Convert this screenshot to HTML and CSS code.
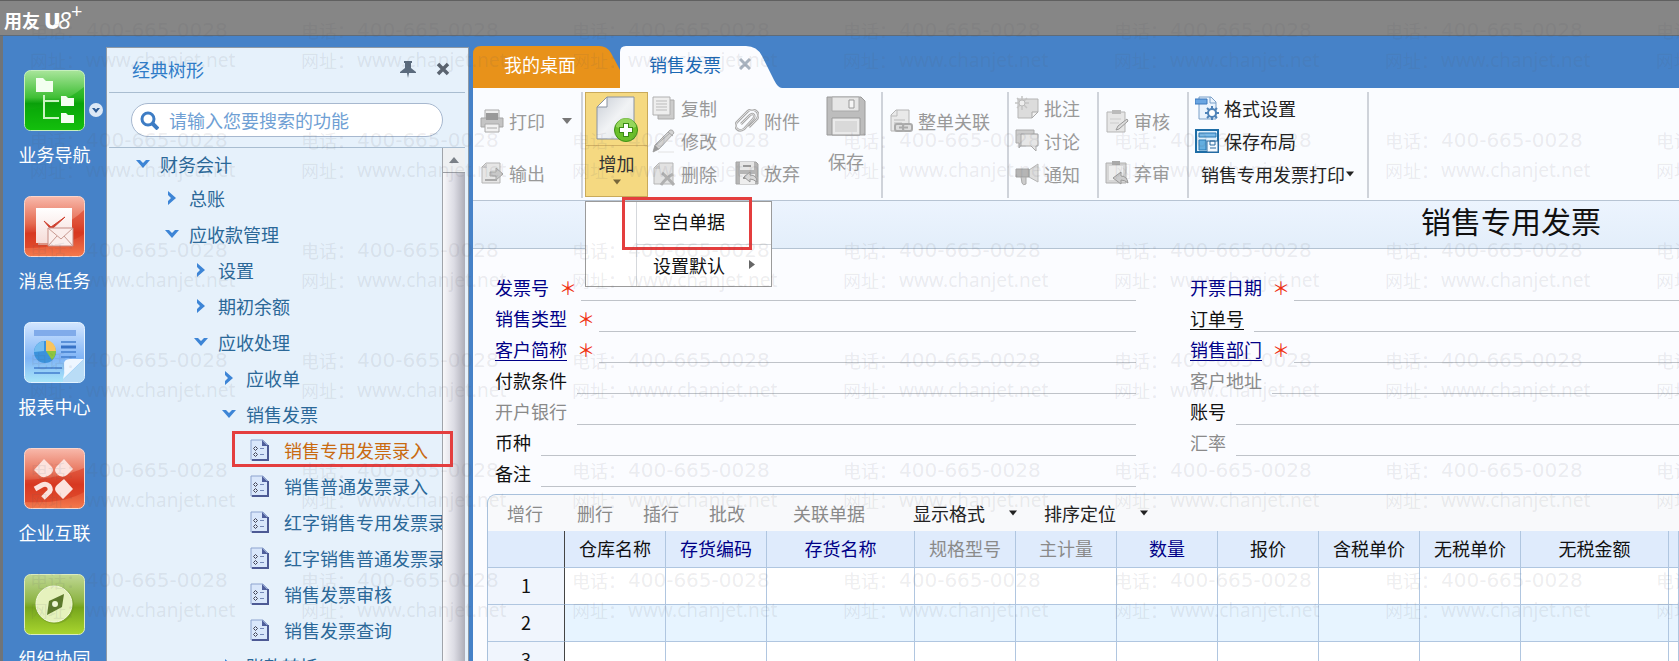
FILE: index.html
```html
<!DOCTYPE html>
<html lang="zh-CN">
<head>
<meta charset="utf-8">
<title>用友U8+ 销售发票</title>
<link rel="stylesheet" href="styles.css">
</head>
<body>
<svg class="defs" aria-hidden="true">
  <defs>
    <linearGradient id="g-green" x1="0" y1="0" x2="0" y2="1"><stop offset="0" stop-color="#a9e59b"/><stop offset=".45" stop-color="#3fbf35"/><stop offset=".55" stop-color="#0aa00a"/><stop offset="1" stop-color="#1fd312"/></linearGradient>
    <linearGradient id="g-red" x1="0" y1="0" x2="0" y2="1"><stop offset="0" stop-color="#f8b9ab"/><stop offset=".45" stop-color="#e56a50"/><stop offset=".6" stop-color="#d9402a"/><stop offset="1" stop-color="#f4794c"/></linearGradient>
    <linearGradient id="g-blue" x1="0" y1="0" x2="0" y2="1"><stop offset="0" stop-color="#d3e6ff"/><stop offset=".6" stop-color="#7fb4f6"/><stop offset="1" stop-color="#a9e6f8"/></linearGradient>
    <linearGradient id="g-lime" x1="0" y1="0" x2="0" y2="1"><stop offset="0" stop-color="#c0d894"/><stop offset=".45" stop-color="#8db444"/><stop offset=".55" stop-color="#76a51c"/><stop offset="1" stop-color="#a9d62f"/></linearGradient>
    <linearGradient id="g-white" x1="0" y1="0" x2="0" y2="1"><stop offset="0" stop-color="#ffffff"/><stop offset="1" stop-color="#f6dcd8"/></linearGradient>
    <linearGradient id="g-page" x1="0" y1="0" x2="1" y2="1"><stop offset="0" stop-color="#c9ced6"/><stop offset=".5" stop-color="#f1f3f5"/><stop offset="1" stop-color="#dfe3e6"/></linearGradient>
    <symbol id="down" viewBox="0 0 14 10"><path d="M0 1h4l3 3 3-3h4L7 9z" fill="#3d85d6"/></symbol>
    <symbol id="right" viewBox="0 0 10 14"><path d="M1 0v4l3 3-3 3v4l8-7z" fill="#3d85d6"/></symbol>
    <symbol id="doc" viewBox="0 0 19 22"><path d="M1 1h12l5 5v15H1z" fill="#d9e7fb" stroke="#8da3cf"/><path d="M18 6v15H2" fill="none" stroke="#4d5a94" stroke-width="2"/><path d="M12 1v6h6z" fill="#4f5f9c"/><g fill="none" stroke="#445"><path d="M5.500 7.500l2 2-2 2-2-2zM5.500 13.500l2 2-2 2-2-2z"/><path d="M10 9.500h4M10 15.500h4" stroke="#7488b8"/></g></symbol>
    <symbol id="caret" viewBox="0 0 10 6"><path d="M0 0h10L5 6z" fill="currentColor"/></symbol>
  </defs>
</svg>

<header class="titlebar">
  <span class="brand">用友</span><span class="brand-u">U</span><span class="brand-8">8</span><sup class="brand-plus">+</sup>
</header>

<div class="shell">
  <nav class="rail">
    <button class="rail-item">
      <svg class="rail-icon" viewBox="0 0 61 61"><rect x=".5" y=".5" width="60" height="60" rx="6" fill="url(#g-green)" stroke="#c6f0bd"/><path d="M1 40Q34 38 60 17v38q0 5-5 5H6q-5 0-5-5z" fill="#07a807" opacity=".45"/><path d="M20 25v23h15M20 31h15" fill="none" stroke="#c9f5c2" stroke-width="2"/><path d="M12 8h7l3 3h7v11H12zM37 26h5l2 2h6v8H37zM37 43h5l2 2h6v8H37z" fill="#f3fff0"/></svg>
      <span>业务导航</span>
      <svg class="rail-more" viewBox="0 0 14 14"><circle cx="7" cy="7" r="7" fill="#dce8f6"/><path d="M3 5h2.500L7 6.500 8.500 5H11L7 10z" fill="#2c5a94"/></svg>
    </button>
    <button class="rail-item">
      <svg class="rail-icon" viewBox="0 0 61 61"><rect x=".5" y=".5" width="60" height="60" rx="6" fill="url(#g-red)" stroke="#fbd5cb"/><path d="M1 37Q38 36 60 14v24q-20 14-59 14z" fill="#d52f18" opacity=".5"/><rect x="14" y="14" width="34" height="35" fill="#dc9485"/><rect x="12" y="12" width="36" height="35" fill="url(#g-white)"/><path d="M20 25l7 6 14-10-12 11q-2 1-4-1z" fill="#cf4130" stroke="#cf4130"/><path d="M24 32h25v18H24z" fill="#fbeeec" stroke="#c58b83"/><path d="M24 32l13 11 12-11M24 50l9-10M49 50l-9-10" fill="none" stroke="#c99a92"/></svg>
      <span>消息任务</span>
    </button>
    <button class="rail-item">
      <svg class="rail-icon" viewBox="0 0 61 61"><rect x=".5" y=".5" width="60" height="60" rx="6" fill="url(#g-blue)" stroke="#e4f3ff"/><path d="M10 8h42v6H10z" fill="#80abea"/><path d="M37 20h15M37 30h15M37 35h15M10 46h28M10 51h26" stroke="#437fce" stroke-width="1.500"/><path d="M37 25h15" stroke="#3672c6" stroke-width="3"/><circle cx="21" cy="30" r="11" fill="#3b92dc"/><path d="M22 29V18a11 11 0 0 1 10 11z" fill="#f9c45c"/><path d="M22 29h10q0 5-4 9z" fill="#8dc63f"/><path d="M10 30a11 11 0 0 1 10-11v10z" fill="#75bdf0"/><path d="M39 57q2-6 1-13-1-7 6-7h14z" fill="#eef6ff"/><path d="M39 58L60 37v17q0 6-6 6H39z" fill="#b9dcf6"/></svg>
      <span>报表中心</span>
    </button>
    <button class="rail-item">
      <svg class="rail-icon" viewBox="0 0 61 61"><rect x=".5" y=".5" width="60" height="60" rx="6" fill="url(#g-red)" stroke="#fbd5cb"/><path d="M1 32Q38 30 60 20v24q-20 12-59 10z" fill="#d52f18" opacity=".5"/><g fill="#fce3de"><path d="M20 11l7 7q4 4 0 8-7 6-12 1l-5-5zM40 11l9 10-6 6q-5 4-10-1-4-4 0-8zM40 31l9 10-10 10-6-6q-4-4 0-8z"/></g><path d="M11 41l7-4q4-2 7 1 3 4-1 7l-5 5" fill="none" stroke="#fce3de" stroke-width="5"/></svg>
      <span>企业互联</span>
    </button>
    <button class="rail-item">
      <svg class="rail-icon" viewBox="0 0 61 61"><rect x=".5" y=".5" width="60" height="60" rx="6" fill="url(#g-lime)" stroke="#dcebbd"/><circle cx="31" cy="31" r="19" fill="#6e9422" opacity=".5"/><circle cx="30" cy="30" r="18" fill="#e6f2bd" stroke="#f6fbe0"/><path d="M40 20l-2 13-15 8 2-14z" fill="#5d7a2b"/><circle cx="31" cy="30" r="3" fill="#eff6d4"/></svg>
      <span>组织协同</span>
    </button>
  </nav>

  <aside class="panel">
    <div class="panel-head">
      <h2>经典树形</h2>
      <button class="icon-button" aria-label="固定"><svg width="16" height="17" viewBox="0 0 16 17"><path d="M4 0h8v2h-1v5l5 4v1H9l-1 5-1-5H0v-1l5-4V2H4z" fill="#5b6b7d"/></svg></button>
      <button class="icon-button" aria-label="关闭"><svg width="14" height="14" viewBox="0 0 14 14"><path d="M2 2l10 10M12 2L2 12" stroke="#5b6470" stroke-width="3.500"/></svg></button>
    </div>
    <div class="search-area">
      <label class="search">
        <svg width="19" height="19" viewBox="0 0 19 19"><circle cx="8" cy="8" r="6" fill="none" stroke="#3d7cc4" stroke-width="3"/><path d="M12 12l6 6" stroke="#3d7cc4" stroke-width="4"/></svg>
        <input type="text" placeholder="请输入您要搜索的功能" aria-label="搜索功能">
      </label>
    </div>
    <div class="tree-area">
      <ul class="tree">
        <li class="node level-0"><svg class="arrow"><use href="#down"/></svg>财务会计</li>
        <li class="node level-1"><svg class="arrow"><use href="#right"/></svg>总账</li>
        <li class="node level-1"><svg class="arrow"><use href="#down"/></svg>应收款管理</li>
        <li class="node level-2"><svg class="arrow"><use href="#right"/></svg>设置</li>
        <li class="node level-2"><svg class="arrow"><use href="#right"/></svg>期初余额</li>
        <li class="node level-2"><svg class="arrow"><use href="#down"/></svg>应收处理</li>
        <li class="node level-3"><svg class="arrow"><use href="#right"/></svg>应收单</li>
        <li class="node level-3"><svg class="arrow"><use href="#down"/></svg>销售发票</li>
        <li class="node leaf current"><svg class="doc"><use href="#doc"/></svg>销售专用发票录入</li>
        <li class="node leaf"><svg class="doc"><use href="#doc"/></svg>销售普通发票录入</li>
        <li class="node leaf"><svg class="doc"><use href="#doc"/></svg>红字销售专用发票录入</li>
        <li class="node leaf"><svg class="doc"><use href="#doc"/></svg>红字销售普通发票录入</li>
        <li class="node leaf"><svg class="doc"><use href="#doc"/></svg>销售发票审核</li>
        <li class="node leaf"><svg class="doc"><use href="#doc"/></svg>销售发票查询</li>
        <li class="node level-3"><svg class="arrow"><use href="#right"/></svg>账款转抵</li>
      </ul>
      <div class="scrollbar"><button class="scroll-up" aria-label="向上滚动"><svg width="10" height="6" viewBox="0 0 10 6"><path d="M0 6h10L5 0z" fill="#7b8087"/></svg></button><div class="thumb"></div></div>
      <div class="mark mark-node"></div>
    </div>
  </aside>

  <main class="work">
    <div class="tabs">
      <button class="tab home">我的桌面</button>
      <button class="tab active">销售发票<svg width="12" height="12" viewBox="0 0 12 12"><path d="M1 1l10 10M11 1L1 11" stroke="#a9b3bf" stroke-width="3"/></svg></button>
    </div>

    <div class="ribbon">
      <div class="group print">
        <div class="column two">
          <button class="cmd"><svg class="ico" viewBox="0 0 24 24"><path d="M5 1h14v9H5z" fill="#eee" stroke="#aaa"/><path d="M1 9h22v9H1z" fill="#c4c4c4" stroke="#a5a5a5"/><path d="M6 4h12v7H6z" fill="#999"/><path d="M5 15h14v8H5z" fill="#f1f1f1" stroke="#aaa"/><path d="M7 19h10" stroke="#aaa"/></svg>打印<svg class="caret wide"><use href="#caret"/></svg></button>
          <button class="cmd"><svg class="ico" viewBox="0 0 24 24"><path d="M6 2h14v20H2V6z" fill="#e6e6e6" stroke="#b5b5b5"/><path d="M2 7l5-5v5z" fill="#ccc"/><path d="M10 11h6V7l7 6-7 6v-4h-6z" fill="#c8c8c8" stroke="#a8a8a8"/><path d="M5 19h12" stroke="#aaa" stroke-width="2"/></svg>输出</button>
        </div>
      </div>
      <div class="group edit">
        <div class="add-wrap">
          <button class="add">
            <span class="add-top"><svg width="42" height="47" viewBox="0 0 42 47"><path d="M11 1h27v42H1V11z" fill="url(#g-page)" stroke="#8a93a0"/><path d="M1 11h10V1z" fill="#fff" stroke="#8a93a0"/><circle cx="30" cy="34" r="11.500" fill="#6abf2a" stroke="#3f8f16"/><path d="M20 31a10 9 0 0 1 20 0q-10 4-20 0z" fill="#a6e070" opacity=".7"/><path d="M30 27v14M23 34h14" stroke="#3b8a15" stroke-width="6"/><path d="M30 28v12M24 34h12" stroke="#fff" stroke-width="4"/></svg></span>
            <span class="add-label">增加<svg class="caret small"><use href="#caret"/></svg></span>
          </button>
          <div class="menu">
            <button class="menu-item">空白单据</button>
            <button class="menu-item">设置默认<svg width="6" height="9" viewBox="0 0 6 9"><path d="M0 0l6 4.500L0 9z" fill="#666"/></svg></button>
          </div>
          <div class="mark mark-menu"></div>
        </div>
        <div class="column">
          <button class="cmd"><svg class="ico" viewBox="0 0 24 24"><path d="M6 4h16v19H6z" fill="#ccc" stroke="#aaa"/><path d="M1 1h17v18H1z" fill="#eee" stroke="#b0b0b0"/><path d="M4 5h11M4 8h11M4 11h11M4 14h11" stroke="#bbb"/></svg>复制</button>
          <button class="cmd"><svg class="ico" viewBox="0 0 24 24"><path d="M1 23l2-7L18 1q3-1 4 3L7 20z" fill="#d3d3d3" stroke="#aaa"/><path d="M1 23l2-7 4 4z" fill="#999"/><path d="M16 3l5 4M4 16L18 4" stroke="#aaa"/><path d="M6 23h16" stroke="#e2e2e2"/></svg>修改</button>
          <button class="cmd"><svg class="ico" viewBox="0 0 24 24"><path d="M7 1h14v21H2V6z" fill="#e2e2e2" stroke="#b5b5b5"/><path d="M2 7h6V1z" fill="#ccc"/><path d="M10 11q4 3 12 12M21 12Q14 16 9 23" stroke="#b0b0b0" stroke-width="3" fill="none"/></svg>删除</button>
        </div>
        <div class="column two attach">
          <button class="cmd"><svg class="ico" viewBox="0 0 24 24"><path d="M6 15L15 6q3-2 4 0t-1 4L9 20q-4 3-7 0t0-7L13 2q4-3 8 0t1 8l-8 8" fill="none" stroke="#aaa" stroke-width="2.500"/><path d="M6 15L15 6q3-2 4 0t-1 4L9 20q-4 3-7 0t0-7L13 2q4-3 8 0t1 8l-8 8" fill="none" stroke="#ddd"/></svg>附件</button>
          <button class="cmd"><svg class="ico" viewBox="0 0 24 24"><path d="M1 1h20l2 2v20H1z" fill="#b5b5b5" stroke="#a3a3a3"/><path d="M5 1h14v8H5z" fill="#e6e6e6"/><path d="M5 13h15v10H5z" fill="#eee"/><path d="M8 5h8M8 17h6" stroke="#999" stroke-width="2"/><path d="M22 21q0-7-7-7v-3l-6 5 6 5v-3q3 0 7 3z" fill="#d8d8d8" stroke="#999"/></svg>放弃</button>
        </div>
        <button class="save"><svg width="40" height="40" viewBox="0 0 40 40"><path d="M1 1h34l4 4v34H1z" fill="#bdbdbd" stroke="#9a9a9a"/><path d="M6 1h27v14H6z" fill="#e6e6e6" stroke="#aaa"/><path d="M23 4h5v8h-5z" fill="#f5f5f5" stroke="#999"/><path d="M6 22h28v17H6z" fill="#eaeaea" stroke="#999"/><path d="M9 25h22v11H9z" fill="#d9d9d9"/></svg>保存</button>
      </div>
      <div class="group relate">
        <div class="column two">
          <button class="cmd"><svg class="ico" viewBox="0 0 24 24"><path d="M7 1h13v21H2V6z" fill="#e9e9e9" stroke="#b5b5b5"/><path d="M2 7h6V1M5 11h11M5 14h8" fill="none" stroke="#bbb"/><rect x="6" y="15" width="9" height="7" rx="2" fill="#ddd" stroke="#aaa" stroke-width="2"/><rect x="14" y="15" width="9" height="7" rx="2" fill="#ddd" stroke="#aaa" stroke-width="2"/><path d="M10 18.500h9" stroke="#aaa" stroke-width="2"/></svg>整单关联</button>
        </div>
      </div>
      <div class="group notes">
        <div class="column">
          <button class="cmd"><svg class="ico" viewBox="0 0 24 24"><path d="M3 3h20v13l-6 6H3z" fill="#dcdcdc" stroke="#b5b5b5"/><path d="M23 16h-6v6z" fill="#f2f2f2" stroke="#aaa"/><path d="M7 0v14M0 7h14M2 2l10 10M12 2L2 12" stroke="#c4c4c4" stroke-width="1.500"/><circle cx="7" cy="7" r="3" fill="#eee" stroke="#bbb"/></svg>批注</button>
          <button class="cmd"><svg class="ico" viewBox="0 0 24 24"><path d="M1 1h18v13H8l-4 5v-5H1z" fill="#ccc" stroke="#aaa"/><path d="M6 5h17v12h-2v5l-5-5H6z" fill="#e6e6e6" stroke="#aaa"/></svg>讨论</button>
          <button class="cmd"><svg class="ico" viewBox="0 0 24 24"><path d="M14 8L23 2v18l-9-5z" fill="#ddd" stroke="#b5b5b5"/><path d="M1 7h13v8H1z" fill="#b5b5b5" stroke="#a3a3a3"/><path d="M6 15h5v7q-3 2-4-1z" fill="#ccc" stroke="#aaa"/></svg>通知</button>
        </div>
      </div>
      <div class="group audit">
        <div class="column two">
          <button class="cmd"><svg class="ico" viewBox="0 0 24 24"><path d="M2 3h18v20H2z" fill="#e6e6e6" stroke="#b5b5b5"/><path d="M7 1h9v4H7z" fill="#bbb"/><path d="M5 10h11M5 14h9" stroke="#ccc"/><path d="M11 21l2-4 9-7 1 2-9 8z" fill="#ddd" stroke="#999"/></svg>审核</button>
          <button class="cmd"><svg class="ico" viewBox="0 0 24 24"><path d="M1 2h20v20H1z" fill="#d6d6d6" stroke="#b0b0b0"/><path d="M4 5h14v14H4z" fill="#eee"/><path d="M7 0h8v4H7z" fill="#aaa"/><path d="M23 22q-1-7-7-7v-4l-8 6 8 6v-4q4 0 7 3z" fill="#ccc" stroke="#999"/></svg>弃审</button>
        </div>
      </div>
      <div class="group format">
        <div class="column">
          <button class="cmd on"><svg class="ico" viewBox="0 0 24 24"><path d="M4 1h12l5 5v17H4z" fill="#eaf3fd" stroke="#7ba0c8"/><path d="M15 1v6h6" fill="none" stroke="#7ba0c8"/><path d="M0 3h12v5H0z" fill="#69a5e2" stroke="#3d78bd"/><circle cx="17" cy="17" r="4" fill="#fff" stroke="#4f83b8" stroke-width="2"/><path d="M17 10v3M17 21v3M10 17h3M21 17h3M12 12l2 2M20 20l2 2M22 12l-2 2M14 20l-2 2" stroke="#4f83b8" stroke-width="2"/></svg>格式设置</button>
          <button class="cmd on"><svg class="ico" viewBox="0 0 24 24"><path d="M1 1h22v22H1z" fill="#dff0fb" stroke="#1e6da6" stroke-width="2"/><path d="M4 4h17v4H4z" fill="#7ab9e6" stroke="#2b7ab5"/><path d="M4 11h7v10H4z" fill="#63aee0" stroke="#2b7ab5"/><path d="M12 12h11v11H12z" fill="#f5faff" stroke="#2a6aa0"/><path d="M15 12h5v4h-5zM15 19h6" fill="none" stroke="#2a6aa0"/></svg>保存布局</button>
          <button class="cmd on text">销售专用发票打印<svg class="caret small"><use href="#caret"/></svg></button>
        </div>
      </div>
    </div>

    <div class="band"><h1>销售专用发票</h1></div>

    <form class="form">
      <div class="fields">
        <div class="field"><label class="key" for="f1">发票号</label><i>＊</i><input id="f1"></div>
        <div class="field"><label class="key" for="f2">销售类型</label><i>＊</i><input id="f2"></div>
        <div class="field"><label class="key link" for="f3">客户简称</label><i>＊</i><input id="f3"></div>
        <div class="field"><label for="f4">付款条件</label><input id="f4"></div>
        <div class="field"><label class="dim" for="f5">开户银行</label><input id="f5"></div>
        <div class="field"><label for="f6">币种</label><input id="f6"></div>
        <div class="field"><label for="f7">备注</label><input id="f7"></div>
      </div>
      <div class="fields">
        <div class="field"><label class="key" for="f8">开票日期</label><i>＊</i><input id="f8"></div>
        <div class="field"><label class="link" for="f9">订单号</label><input id="f9"></div>
        <div class="field"><label class="key link" for="f10">销售部门</label><i>＊</i><input id="f10"></div>
        <div class="field"><label class="dim" for="f11">客户地址</label><input id="f11"></div>
        <div class="field"><label for="f12">账号</label><input id="f12"></div>
        <div class="field"><label class="dim" for="f13">汇率</label><input id="f13"></div>
      </div>
    </form>

    <section class="grid">
      <div class="grid-tools">
        <div class="row-tools"><button>增行</button><button>删行</button><button>插行</button><button>批改</button></div>
        <button>关联单据</button>
        <div class="view-tools"><button class="on">显示格式<svg class="caret small"><use href="#caret"/></svg></button><button class="on">排序定位<svg class="caret small"><use href="#caret"/></svg></button></div>
      </div>
      <table>
        <colgroup><col class="c-num"><col class="c"><col class="c"><col class="c-wide"><col class="c"><col class="c"><col class="c"><col class="c"><col class="c"><col class="c"><col class="c-wide"><col></colgroup>
        <thead><tr><th></th><th>仓库名称</th><th class="key">存货编码</th><th class="key">存货名称</th><th class="dim">规格型号</th><th class="dim">主计量</th><th class="key">数量</th><th>报价</th><th>含税单价</th><th>无税单价</th><th>无税金额</th><th></th></tr></thead>
        <tbody>
          <tr><th>1</th><td></td><td></td><td></td><td></td><td></td><td></td><td></td><td></td><td></td><td></td><td></td></tr>
          <tr><th>2</th><td></td><td></td><td></td><td></td><td></td><td></td><td></td><td></td><td></td><td></td><td></td></tr>
          <tr><th>3</th><td></td><td></td><td></td><td></td><td></td><td></td><td></td><td></td><td></td><td></td><td></td></tr>
        </tbody>
      </table>
    </section>
  </main>
</div>

<div class="watermark" id="watermark"></div>
<script src="watermark.js"></script>
</body>
</html>
```

FILE: styles.css
```css
* { box-sizing: border-box; }

body {
  margin: 0;
  height: 100vh;
  overflow: hidden;
  display: flex;
  flex-direction: column;
  position: relative;
  background: #4682c8;
  color: #111;
  font: 18px/24px "Noto Sans CJK SC", sans-serif;
}

button, input {
  font: inherit;
  color: inherit;
  border: 0;
  padding: 0;
  background: none;
}

button { white-space: nowrap; }
svg { display: block; flex: none; }
ul { list-style: none; margin: 0; padding: 0; }
h1, h2 { margin: 0; font-weight: 400; }
.defs { position: absolute; width: 0; height: 0; }

/* Title bar */
.titlebar {
  flex: none;
  height: 36px;
  display: flex;
  align-items: center;
  padding: 4px 4px 0;
  background: #868686;
  border-top: 1px solid #606060;
  border-bottom: 1px solid #5f6b78;
  color: #fff;
}
.brand { font-weight: 700; }
.brand-u { margin-left: 4px; font: 900 22px/24px "Open Sans", sans-serif; }
.brand-8 { margin-left: -3px; font: italic 24px/24px "Open Sans", sans-serif; }
.brand-plus { font: 20px/12px "Open Sans", sans-serif; align-self: flex-start; }

.shell {
  flex: 1;
  min-height: 0;
  display: flex;
  border-left: 3px solid #707478;
}

/* Navigation rail */
.rail {
  flex: none;
  width: 103px;
  padding-top: 34px;
  display: flex;
  flex-direction: column;
  gap: 30px;
  overflow: hidden;
}
.rail-item {
  flex: none;
  position: relative;
  display: flex;
  flex-direction: column;
  align-items: center;
  gap: 11px;
  color: #fff;
}
.rail-icon { width: 61px; height: 61px; }
.rail-more {
  position: absolute;
  right: 3px;
  top: 33px;
  width: 14px;
  height: 14px;
}

/* Tree panel */
.panel {
  flex: none;
  width: 363px;
  margin: 11px 4px 0 0;
  display: flex;
  flex-direction: column;
  padding: 0 3px 0 2px;
  background: #e6f1fb;
  border: 1px solid #8f9aa6;
  border-bottom: 0;
  color: #2b6898;
}
.panel-head {
  flex: none;
  height: 45px;
  display: flex;
  align-items: center;
  gap: 20px;
  padding: 0 15px 2px 23px;
  border-bottom: 1px solid #a9bdd0;
}
.panel-head h2 { flex: 1; font-size: 18px; color: #2f7cc8; }
.search-area {
  flex: none;
  padding: 10px 22px 10px 22px;
  border-bottom: 1px solid #a9bdd0;
}
.search {
  height: 34px;
  display: flex;
  align-items: center;
  gap: 10px;
  padding: 0 8px;
  background: #fff;
  border: 1px solid #a7b8cf;
  border-radius: 17px;
}
.search input { flex: 1; min-width: 0; outline: 0; }
.search input::placeholder { color: #6f9fd4; opacity: 1; }

.tree-area { flex: 1; min-height: 0; display: flex; position: relative; }
.tree { flex: 1; min-width: 0; overflow: hidden; }
.node {
  height: 36px;
  display: flex;
  align-items: center;
  white-space: nowrap;
}
.node:first-child { height: 32px; }
.arrow { width: 14px; height: 14px; margin-right: 10px; }
.doc { width: 19px; height: 22px; margin-right: 15px; }
.level-0 { padding-left: 27px; }
.level-1 { padding-left: 56px; }
.level-2 { padding-left: 85px; }
.level-3 { padding-left: 113px; }
.leaf { padding-left: 141px; }
.current { color: #c96a10; }

.scrollbar {
  flex: none;
  width: 23px;
  display: flex;
  flex-direction: column;
  border-left: 1px solid #a0a4aa;
}
.scroll-up {
  height: 25px;
  display: grid;
  place-items: center;
  background: #eef0f2;
  border-bottom: 1px solid #9b9ea4;
}
.thumb {
  flex: 1;
  background: linear-gradient(90deg, #f8f8fa, #dcdce4 50%, #aeaeb8);
}

.mark { position: absolute; border: 3px solid #e43e3e; pointer-events: none; }
.mark-node { left: 123px; right: 12px; top: 283px; height: 36px; }
.mark-menu { left: 37px; top: 105px; width: 130px; height: 53px; z-index: 3; }

/* Work area */
.work {
  flex: 1;
  min-width: 0;
  display: flex;
  flex-direction: column;
}
.tabs { flex: none; display: flex; padding-top: 10px; }
.tab { height: 42px; display: flex; align-items: center; }
.home {
  width: 147px;
  padding: 0 0 6px 31px;
  color: #fff;
  background: #e8921a;
  clip-path: path("M0 42V8Q0 0 8 0H126Q134 0 138 7L147 24V42Z");
}
.active {
  width: 162px;
  gap: 18px;
  padding: 0 0 6px 29px;
  color: #1a68b4;
  background: #fbfcff;
  clip-path: path("M0 42V6Q0 0 6 0H126Q137 0 142 10L154 34Q158 42 162 42Z");
}

/* Ribbon */
.ribbon {
  flex: none;
  height: 113px;
  display: flex;
  padding: 4px 0 2px;
  background: #fafcff;
  border-bottom: 1px solid #b7c4d3;
  color: #999;
}
.group {
  flex: none;
  display: flex;
  border-right: 2px solid #cfd3da;
}
.column { display: flex; flex-direction: column; gap: 9px; padding-top: 4px; }
.two { gap: 28px; padding-top: 17px; }
.cmd { display: flex; align-items: center; gap: 5px; text-align: left; }
.cmd.on, .on { color: #222; }
.cmd.text { gap: 1px; padding-left: 6px; }
.ico { width: 24px; height: 24px; }
.caret { width: 8px; height: 6px; }
.caret.wide { width: 10px; margin-left: 12px; color: #777; }
.print { width: 110px; padding-left: 7px; }
.edit { width: 300px; padding-left: 2px; }
.relate { width: 126px; padding-left: 6px; }
.notes { width: 90px; padding-left: 6px; }
.audit { width: 90px; padding-left: 6px; }
.format { width: 180px; padding-left: 6px; }
.attach { padding-left: 18px; }

.add-wrap { position: relative; margin-right: 4px; }
.add {
  width: 63px;
  height: 105px;
  display: flex;
  flex-direction: column;
  background: #f5d981;
  border: 1px solid #c9aa5a;
  color: #333;
}
.add-top {
  width: 100%;
  height: 53px;
  display: grid;
  place-items: center;
  border-bottom: 1px solid #d2b163;
}
.add-label {
  width: 100%;
  padding-top: 5px;
  display: flex;
  flex-direction: column;
  align-items: center;
  gap: 4px;
}
.add-label .caret { color: #77663a; }
.save {
  margin-left: 26px;
  padding-top: 4px;
  display: flex;
  flex-direction: column;
  align-items: center;
  gap: 13px;
  height: 84px;
}
.menu {
  position: absolute;
  left: 0;
  top: 109px;
  z-index: 2;
  width: 187px;
  display: grid;
  background: linear-gradient(90deg, #fff 50px, #d5d8dc 50px, #d5d8dc 51px, #fff 51px);
  border: 1px solid #9b9b9b;
}
.menu-item {
  height: 42px;
  display: flex;
  align-items: center;
  gap: 24px;
  margin-left: 51px;
  padding: 0 0 4px 16px;
  color: #111;
}
.menu-item + .menu-item { border-top: 1px solid #d5d8dc; padding-bottom: 2px; }

/* Document */
.band {
  flex: none;
  height: 48px;
  padding: 1px 0 0 948px;
  background: linear-gradient(#ecf4fe, #e3eefa);
  border-bottom: 1px solid #b4c3d2;
}
.band h1 { font-size: 30px; line-height: 36px; white-space: nowrap; }

.form {
  flex: none;
  display: grid;
  grid-template-columns: 641px 1fr;
  column-gap: 54px;
  padding: 21px 0 7px 22px;
  background: #fbfcff;
}
.field { height: 31px; display: flex; }
.field label { padding-top: 5px; white-space: nowrap; }
.field i {
  width: 22px;
  padding: 5px 0 0 10px;
  color: #f03010;
  font-style: normal;
}
.field input {
  flex: 1;
  min-width: 0;
  margin-left: 10px;
  border-bottom: 1px solid #bfc3c9;
}
.key { color: #000087; }
.dim { color: #8a8a8a; }
.link { text-decoration: underline; text-underline-offset: 3px; text-decoration-thickness: 1px; }

/* Detail grid */
.grid {
  flex: 1;
  min-height: 0;
  overflow: hidden;
  padding-left: 14px;
  background: #fbfcff;
}
.grid-tools {
  height: 37px;
  display: flex;
  align-items: center;
  gap: 48px;
  padding: 0 0 0 19px;
  background: #f8f9fb;
  border: 1px solid #a9c1dc;
  border-width: 1px 0 0 1px;
  border-radius: 9px 0 0 0;
  color: #8a8a8a;
}
.row-tools { display: flex; gap: 30px; }
.row-tools button:first-child { margin-right: 4px; }
.view-tools { display: flex; gap: 27px; }
.view-tools button { display: flex; align-items: center; gap: 24px; }

table {
  width: 100%;
  table-layout: fixed;
  border-collapse: separate;
  border-spacing: 0;
  background: #fff;
  border-left: 1px solid #a9c1dc;
}
.c-num { width: 77px; }
.c { width: 101px; }
.c-wide { width: 148px; }
th, td {
  height: 37px;
  padding: 0 0 2px;
  font-weight: 400;
  border: 1px solid #b0c6e0;
  border-width: 0 1px 1px 0;
}
thead th { background: #dfebfc; }
tbody th { background: #f0f5fd; }
tr th:first-child { border-right-color: #444; }
tbody tr:nth-child(even) td { background: #e7f4ff; }

/* Repeating contact watermark */
.watermark {
  position: absolute;
  inset: 0;
  z-index: 5;
  overflow: hidden;
  pointer-events: none;
  display: grid;
  grid-template-columns: repeat(7, 271px);
  grid-auto-rows: 110px;
  padding: 18px 0 0 30px;
  color: rgba(90, 90, 100, 0.11);
}
.watermark p { margin: 0; display: grid; grid-template-columns: 56px 1fr; row-gap: 6px; align-content: start; white-space: nowrap; }
.phone { font-family: "DejaVu Sans", sans-serif; font-size: 20px; }
.site { font-family: "Noto Sans", sans-serif; font-size: 19px; }
```

FILE: watermark.js
```js
const layer = document.getElementById("watermark");
for (let i = 0; i < 42; i++) {
  const tile = document.createElement("p");
  tile.innerHTML = '<span>电话：</span><span class="phone">400-665-0028</span><span>网址：</span><span class="site">www.chanjet.net</span>';
  layer.append(tile);
}
```
